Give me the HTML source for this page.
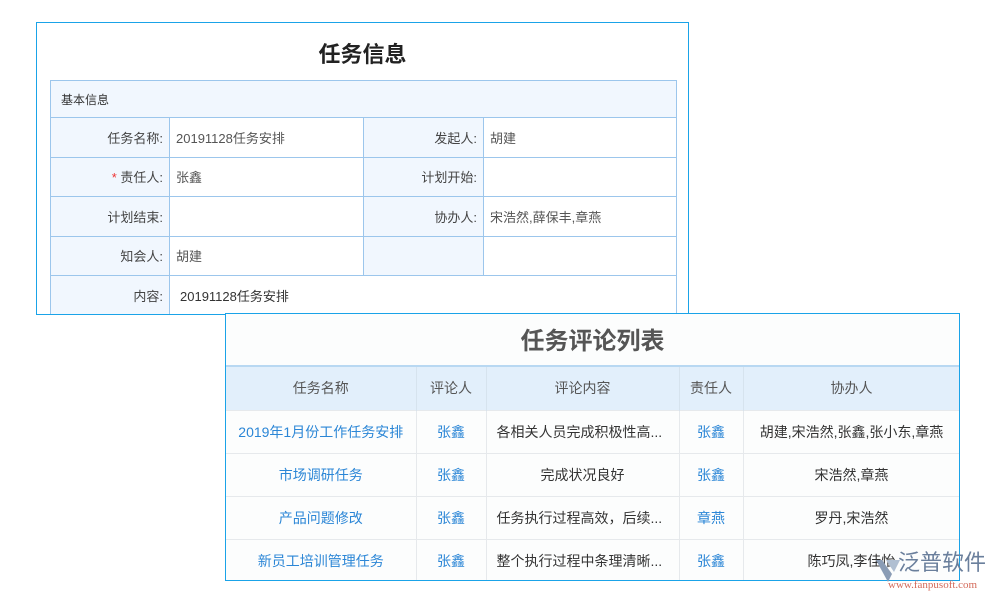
<!DOCTYPE html>
<html><head><meta charset="utf-8"><style>
*{margin:0;padding:0;box-sizing:border-box}
body{width:1000px;height:600px;background:#fff;position:relative;overflow:hidden;font-family:"Liberation Sans","Noto Sans CJK SC",sans-serif;}
.p1{position:absolute;left:36px;top:22px;width:653px;height:293px;border:1px solid #1aa3e8;background:#fff;overflow:hidden}
.t1{position:absolute;left:0;width:100%;top:14px;text-align:center;font-size:22px;font-weight:bold;color:#222}
table{border-collapse:collapse;table-layout:fixed}
.tb1{position:absolute;left:13px;top:57px;width:626px;font-size:13px;color:#555}
.tb1 td{border:1px solid #9cc6ec;height:39.5px;padding:0 6px}
.tb1 .h{background:#f1f7fe;height:37px;color:#333;font-size:12px;padding-left:10px}
.tb1 .l{background:#f1f7fe;text-align:right;color:#444}
.p2{position:absolute;left:225px;top:313px;width:735px;height:268px;border:1px solid #1aa3e8;background:#fcfdfd;overflow:hidden}
.t2{position:absolute;left:0;width:100%;top:7px;text-align:center;font-size:24px;font-weight:bold;color:#555}
.tb2{position:absolute;left:0;top:51px;width:734px;font-size:14px;color:#333;text-align:center}
.tb2 th{background:#e2effb;font-weight:normal;color:#555;height:44px;border-top:2px solid #b8d8f2;border-right:1px solid #d6e3ee}
.tb2 td{height:43px;border-top:1px solid #e6e9ec;border-right:1px solid #e6e9ec;white-space:nowrap;overflow:hidden}
.b{color:#2b86d6}
.logo{position:absolute;left:870px;top:548px;width:130px;height:45px;white-space:nowrap}
</style></head><body>
<div class="p1">
<div class="t1">任务信息</div>
<table class="tb1">
<colgroup><col style="width:119px"><col style="width:194px"><col style="width:120px"><col style="width:193px"></colgroup>
<tr><td class="h" colspan="4">基本信息</td></tr>
<tr><td class="l">任务名称:</td><td>20191128任务安排</td><td class="l">发起人:</td><td>胡建</td></tr>
<tr><td class="l"><span style="color:#e33">*</span> 责任人:</td><td>张鑫</td><td class="l">计划开始:</td><td></td></tr>
<tr><td class="l">计划结束:</td><td></td><td class="l">协办人:</td><td>宋浩然,薛保丰,章燕</td></tr>
<tr><td class="l">知会人:</td><td>胡建</td><td class="l"></td><td></td></tr>
<tr><td class="l">内容:</td><td colspan="3" style="color:#333;padding-left:10px">20191128任务安排</td></tr>
</table>
</div>
<div class="p2">
<div class="t2">任务评论列表</div>
<table class="tb2">
<colgroup><col style="width:190px"><col style="width:70px"><col style="width:193px"><col style="width:64px"><col style="width:217px"></colgroup>
<tr><th>任务名称</th><th>评论人</th><th>评论内容</th><th>责任人</th><th>协办人</th></tr>
<tr><td class="b">2019年1月份工作任务安排</td><td class="b">张鑫</td><td style="text-align:left;padding-left:10px">各相关人员完成积极性高...</td><td class="b">张鑫</td><td>胡建,宋浩然,张鑫,张小东,章燕</td></tr>
<tr><td class="b">市场调研任务</td><td class="b">张鑫</td><td>完成状况良好</td><td class="b">张鑫</td><td>宋浩然,章燕</td></tr>
<tr><td class="b">产品问题修改</td><td class="b">张鑫</td><td style="text-align:left;padding-left:10px">任务执行过程高效，后续...</td><td class="b">章燕</td><td>罗丹,宋浩然</td></tr>
<tr><td class="b">新员工培训管理任务</td><td class="b">张鑫</td><td style="text-align:left;padding-left:10px">整个执行过程中条理清晰...</td><td class="b">张鑫</td><td>陈巧凤,李佳怡</td></tr>
</table>
</div>
<div class="logo">
<svg width="28" height="30" style="position:absolute;left:4px;top:6px"><path d="M2 6 L14 28 L18 20 L8 6Z" fill="#8a9cb5"/><path d="M12 6 L26 6 L20 18Z" fill="#b0bfd2"/></svg>
<div style="position:absolute;left:28px;top:2px;font-size:22px;line-height:26px;color:#6a7f9c">泛普软件</div>
<div style="position:absolute;left:18px;top:31px;font-size:11px;color:#d46a5a;font-family:'Liberation Serif',serif">www.fanpusoft.com</div>
</div>
</body></html>
